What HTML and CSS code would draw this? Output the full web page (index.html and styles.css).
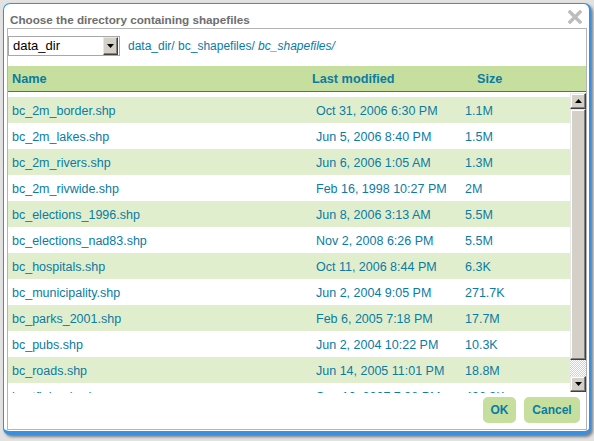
FILE: index.html
```html
<!DOCTYPE html>
<html>
<head>
<meta charset="utf-8">
<link rel="stylesheet" href="styles.css">
</head>
<body>
<div class="dialog">
  <div class="titlebar">
    <span class="title">Choose the directory containing shapefiles</span>
    <svg class="close" width="14" height="14" viewBox="0 0 14 14"><path d="M2 2 L12 12 M12 2 L2 12" stroke="#bdbdbd" stroke-width="3.4" stroke-linecap="square"/></svg>
  </div>
  <div class="panel">
    <div class="toolbar">
      <div class="select">
        <span class="select-value">data_dir</span>
        <span class="select-btn"><svg width="7" height="4" viewBox="0 0 7 4"><path d="M0 0 H7 L3.5 4 Z" fill="#000"/></svg></span>
      </div>
      <div class="crumbs"><span>data_dir/</span> <span>bc_shapefiles/</span> <em>bc_shapefiles/</em></div>
    </div>
    <div class="thead">
      <span>Name</span><span>Last modified</span><span>Size</span>
    </div>
    <div class="listwrap">
      <div class="rows">
        <div class="row alt"><span>bc_2m_border.shp</span><span>Oct 31, 2006 6:30 PM</span><span>1.1M</span></div>
        <div class="row"><span>bc_2m_lakes.shp</span><span>Jun 5, 2006 8:40 PM</span><span>1.5M</span></div>
        <div class="row alt"><span>bc_2m_rivers.shp</span><span>Jun 6, 2006 1:05 AM</span><span>1.3M</span></div>
        <div class="row"><span>bc_2m_rivwide.shp</span><span>Feb 16, 1998 10:27 PM</span><span>2M</span></div>
        <div class="row alt"><span>bc_elections_1996.shp</span><span>Jun 8, 2006 3:13 AM</span><span>5.5M</span></div>
        <div class="row"><span>bc_elections_nad83.shp</span><span>Nov 2, 2008 6:26 PM</span><span>5.5M</span></div>
        <div class="row alt"><span>bc_hospitals.shp</span><span>Oct 11, 2006 8:44 PM</span><span>6.3K</span></div>
        <div class="row"><span>bc_municipality.shp</span><span>Jun 2, 2004 9:05 PM</span><span>271.7K</span></div>
        <div class="row alt"><span>bc_parks_2001.shp</span><span>Feb 6, 2005 7:18 PM</span><span>17.7M</span></div>
        <div class="row"><span>bc_pubs.shp</span><span>Jun 2, 2004 10:22 PM</span><span>10.3K</span></div>
        <div class="row alt"><span>bc_roads.shp</span><span>Jun 14, 2005 11:01 PM</span><span>18.8M</span></div>
        <div class="row"><span>bc_tfl_lands.shp</span><span>Sep 10, 2007 7:38 PM</span><span>496.3K</span></div>
      </div>
      <div class="scrollbar">
        <div class="sb-btn"><svg width="7" height="4" viewBox="0 0 7 4"><path d="M0 4 H7 L3.5 0 Z" fill="#000"/></svg></div>
        <div class="sb-thumb"></div>
        <div class="sb-track"></div>
        <div class="sb-btn"><svg width="7" height="4" viewBox="0 0 7 4"><path d="M0 0 H7 L3.5 4 Z" fill="#000"/></svg></div>
      </div>
    </div>
    <div class="footer">
      <button class="btn ok">OK</button>
      <button class="btn cancel">Cancel</button>
    </div>
  </div>
</div>
</body>
</html>
```

FILE: styles.css
```css
html, body {
  margin: 0;
  padding: 0;
}
body {
  width: 594px;
  height: 441px;
  overflow: hidden;
  background: #e2e2e2;
  font-family: "Liberation Sans", Arial, sans-serif;
  font-size: 12px;
  color: #0a7ba3;
}
.dialog {
  margin: 3px 0 0 3px;
  width: 585px;
  height: 427px;
  background: #fff;
  border: 1px solid #3a90de;
  border-right-width: 2px;
  border-bottom-width: 4px;
  border-radius: 7px;
  box-shadow: 2px 2px 3px rgba(0, 0, 0, 0.45);
  display: flex;
  flex-direction: column;
}
.titlebar {
  height: 24px;
  box-sizing: border-box;
  display: flex;
  justify-content: space-between;
  align-items: flex-start;
  padding: 0 7px 0 6px;
}
.title {
  padding-top: 8px;
  line-height: 15px;
  font-weight: bold;
  color: #6e6e6e;
  font-size: 11.7px;
}
.close {
  margin-top: 6px;
  display: block;
}
.panel {
  flex: 1;
  margin: 0 2px 1px 3px;
  border: 1px solid #b4b4b4;
  display: flex;
  flex-direction: column;
}
.toolbar {
  height: 37px;
  box-sizing: border-box;
  padding-top: 7px;
  display: flex;
  align-items: flex-start;
}
.select {
  width: 112px;
  height: 20px;
  box-sizing: border-box;
  border: 1px solid #a7a7a7;
  display: flex;
  justify-content: space-between;
  background: #fff;
}
.select-value {
  padding-left: 4px;
  line-height: 18px;
  color: #000;
  font-size: 13px;
}
.select-btn {
  width: 15px;
  height: 18px;
  box-sizing: border-box;
  background: #d4d0c8;
  border: 1px solid;
  border-color: #e8e8e8 #404040 #404040 #e8e8e8;
  box-shadow: inset -1px -1px #808080;
  display: flex;
  align-items: center;
  justify-content: center;
  margin-right: 1px;
}
.select-btn svg, .sb-btn svg {
  display: block;
}
.crumbs {
  margin-left: 8px;
  line-height: 21px;
  color: #0a7ba3;
}
.crumbs em {
  font-style: italic;
}
.thead {
  height: 26px;
  box-sizing: border-box;
  background: #c6df9e;
  border-bottom: 1px solid #1a82a8;
  display: grid;
  grid-template-columns: 300px 165px 1fr;
  padding: 2px 0 0 4px;
  line-height: 23px;
  font-weight: bold;
  font-size: 12.7px;
}
.listwrap {
  height: 301px;
  display: flex;
}
.rows {
  width: 562px;
  padding-top: 5px;
  overflow: hidden;
  box-sizing: border-box;
}
.row {
  height: 26px;
  box-sizing: border-box;
  padding-top: 2px;
  line-height: 24px;
  display: grid;
  grid-template-columns: 304px 149px 1fr;
  padding-left: 4px;
  white-space: nowrap;
  font-size: 12.5px;
}
.row.alt {
  background: #e1eecd;
}
.scrollbar {
  width: 16px;
  height: 299px;
  margin-top: 1px;
  display: flex;
  flex-direction: column;
}
.sb-btn, .sb-thumb {
  box-sizing: border-box;
  background: #d4d0c8;
  border: 1px solid;
  border-color: #e8e8e8 #404040 #404040 #e8e8e8;
  box-shadow: inset -1px -1px #808080, inset 1px 1px #fff;
}
.sb-btn {
  height: 16px;
  display: flex;
  align-items: center;
  justify-content: center;
}
.sb-thumb {
  height: 251px;
}
.sb-track {
  height: 16px;
  background-color: #fff;
  background-image:
    linear-gradient(45deg, #d4d0c8 25%, transparent 25%, transparent 75%, #d4d0c8 75%),
    linear-gradient(45deg, #d4d0c8 25%, transparent 25%, transparent 75%, #d4d0c8 75%);
  background-size: 2px 2px;
  background-position: 0 0, 1px 1px;
}
.footer {
  flex: 1;
  display: flex;
  justify-content: flex-end;
  align-items: flex-start;
  gap: 8px;
  padding: 4px 6px 0 0;
}
.btn {
  height: 26px;
  border: none;
  border-radius: 5px;
  background: #c6df9e;
  color: #0a7ba3;
  font-family: "Liberation Sans", Arial, sans-serif;
  font-weight: bold;
  font-size: 12px;
  padding: 0;
}
.ok {
  width: 33px;
}
.cancel {
  width: 56px;
}
```
